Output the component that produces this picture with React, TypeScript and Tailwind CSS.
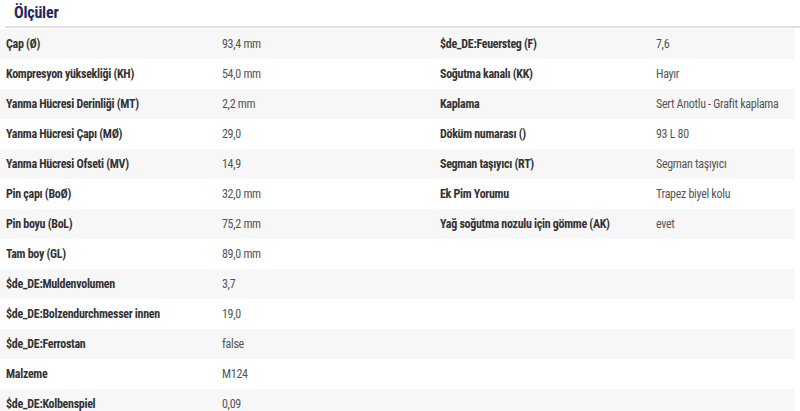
const left: [string, string][] = [
  ["Çap (Ø)", "93,4 mm"],
  ["Kompresyon yüksekliği (KH)", "54,0 mm"],
  ["Yanma Hücresi Derinliği (MT)", "2,2 mm"],
  ["Yanma Hücresi Çapı (MØ)", "29,0"],
  ["Yanma Hücresi Ofseti (MV)", "14,9"],
  ["Pin çapı (BoØ)", "32,0 mm"],
  ["Pin boyu (BoL)", "75,2 mm"],
  ["Tam boy (GL)", "89,0 mm"],
  ["$de_DE:Muldenvolumen", "3,7"],
  ["$de_DE:Bolzendurchmesser innen", "19,0"],
  ["$de_DE:Ferrostan", "false"],
  ["Malzeme", "M124"],
  ["$de_DE:Kolbenspiel", "0,09"],
];

const right: [string, string][] = [
  ["$de_DE:Feuersteg (F)", "7,6"],
  ["Soğutma kanalı (KK)", "Hayır"],
  ["Kaplama", "Sert Anotlu - Grafit kaplama"],
  ["Döküm numarası ()", "93 L 80"],
  ["Segman taşıyıcı (RT)", "Segman taşıyıcı"],
  ["Ek Pim Yorumu", "Trapez biyel kolu"],
  ["Yağ soğutma nozulu için gömme (AK)", "evet"],
];

export default function App() {
  return (
    <div
      className="w-[800px] h-[411px] overflow-hidden bg-white"
      style={{ fontFamily: "'Roboto Condensed', 'Roboto', 'Liberation Sans', sans-serif" }}
    >
      <div className="h-[26px] flex items-center pl-[14px]">
        <h2 className="text-[16px] font-bold text-[#1f2a5c] tracking-[-0.2px] leading-none">Ölçüler</h2>
      </div>
      <div className="ml-[5px] h-[2px] bg-[#e1e1e1]" />
      <div className="mt-px w-[794px]">
        {left.map((l, i) => {
          const r = right[i];
          return (
            <div
              key={i}
              className={`flex h-[30px] items-center text-[12px] tracking-[-0.3px] ${i % 2 === 0 ? "bg-[#f7f7f7]" : "bg-white"}`}
            >
              <div className="w-[222px] pl-[6px] font-bold text-[#333]">{l[0]}</div>
              <div className="w-[218px] text-[#555]">{l[1]}</div>
              <div className="w-[216px] font-bold text-[#333]">{r ? r[0] : ""}</div>
              <div className="flex-1 text-[#555]">{r ? r[1] : ""}</div>
            </div>
          );
        })}
      </div>
    </div>
  );
}
